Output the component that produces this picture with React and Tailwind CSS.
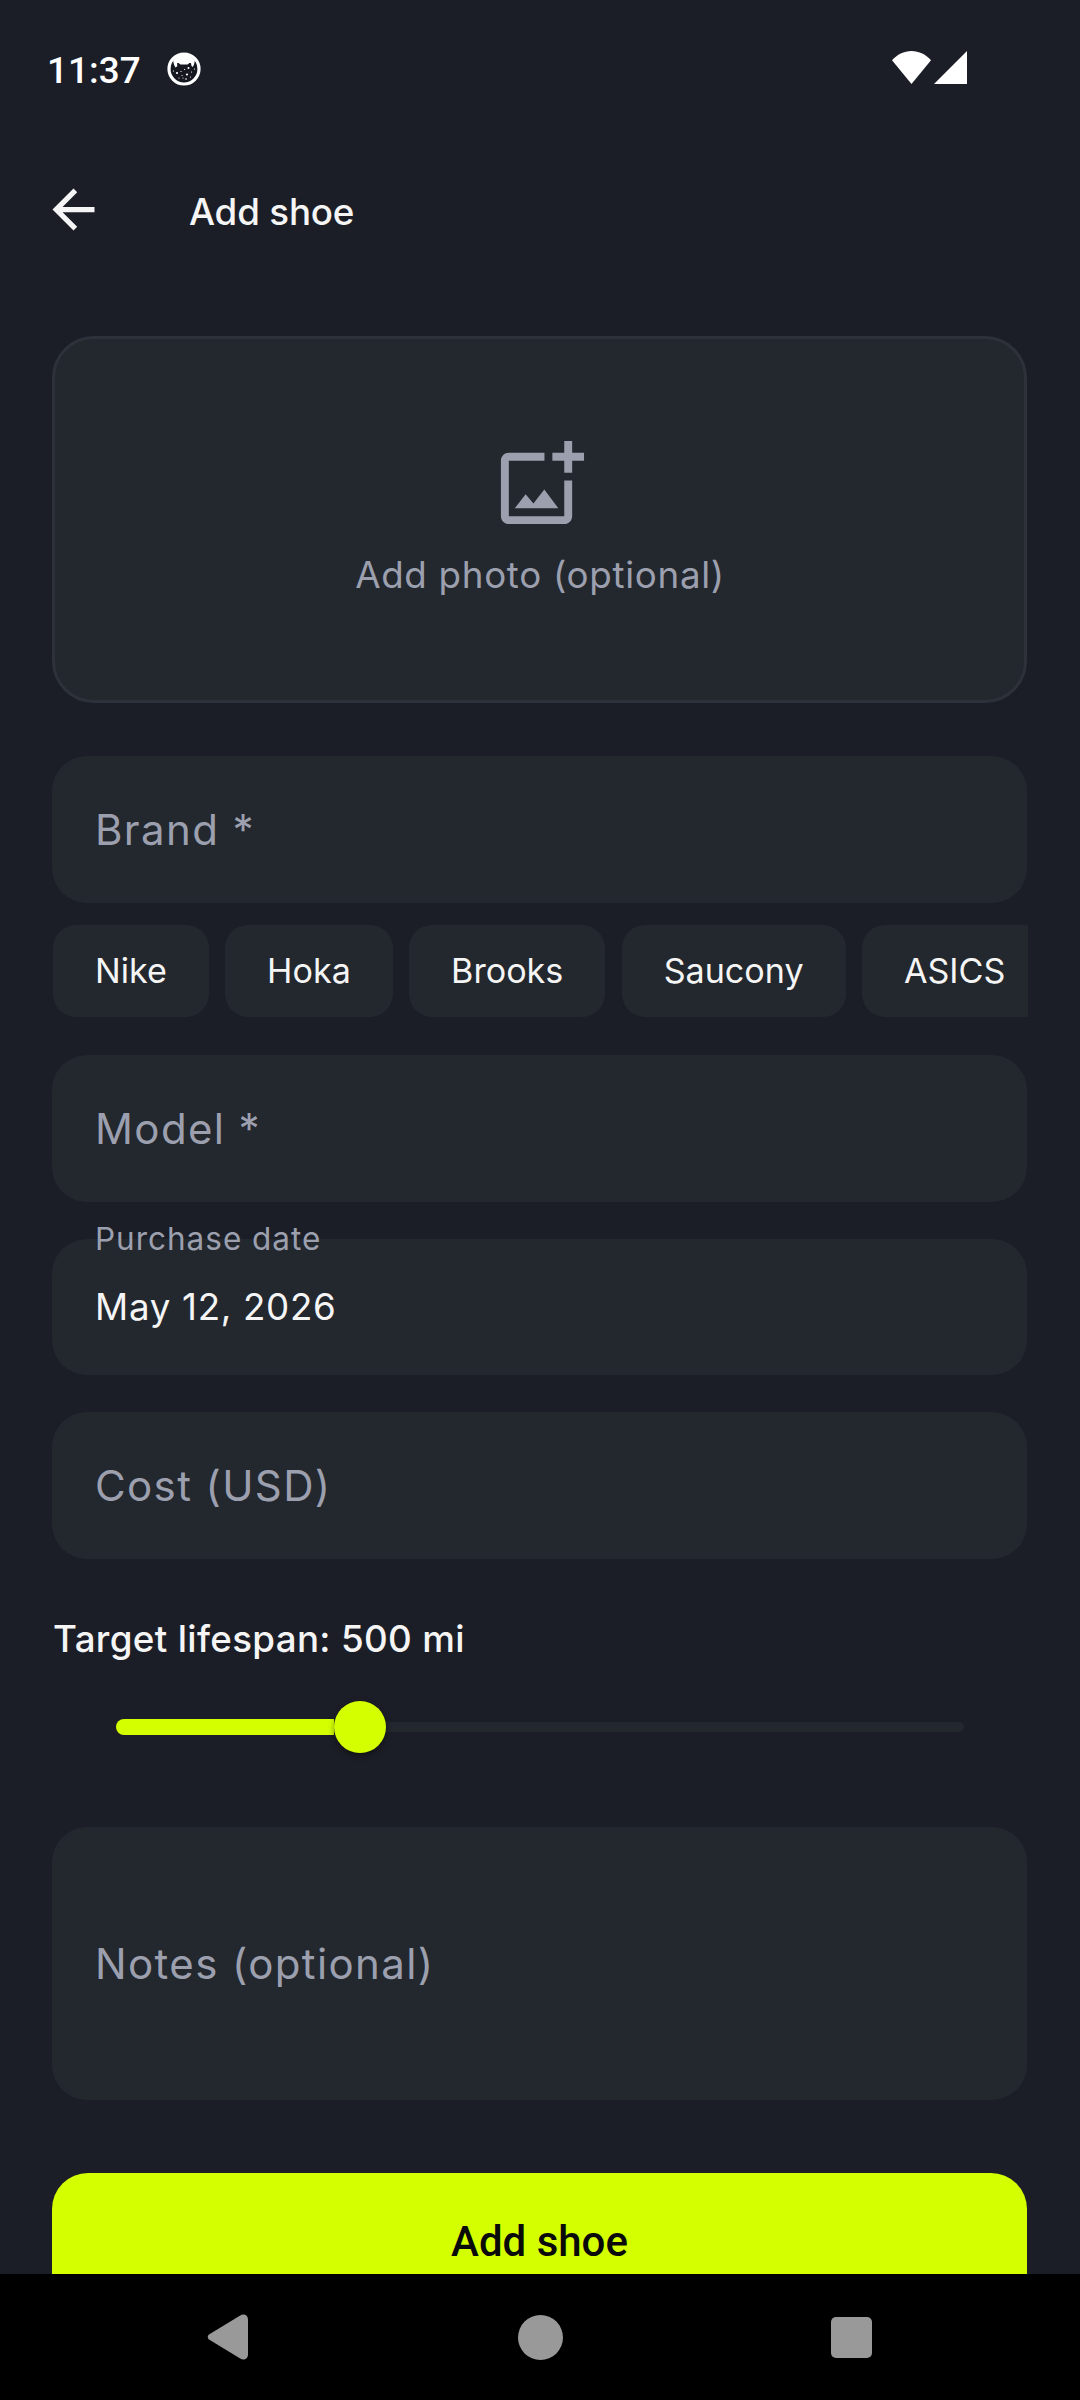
const BRANDS = ["Nike", "Hoka", "Brooks", "Saucony", "ASICS"];

function StatusBar() {
  return (
    <header className="flex h-[141px] shrink-0 items-start justify-between pl-[47px] pr-[113px]">
      <div className="flex items-center pt-[49px]">
        <span className="font-['Roboto',sans-serif] text-[36.75px] font-medium leading-[43px] tracking-[0.1px] text-white">
          11:37
        </span>
        <svg className="ml-[26px] -mt-[3px] size-[34px]" viewBox="0 0 34 34">
          <circle cx="17" cy="17" r="15" fill="#15181f" stroke="#fff" strokeWidth="3.2" />
          <path
            d="M6.2 8.6C9 4.6 13 2 17 2s8 2.6 10.8 6.6c-.2 2.6-.8 4.6-2 6.4l-1.3-.9-.6-3c-1.700-.2-2.400.6-3.300 1.400h-7.200c-.9-.8-1.600-1.600-3.300-1.400l.2 3.200-1.900 1.100C7.200 13.400 6.400 11.200 6.200 8.600z"
            fill="#fff"
          />
          <g fill="#fff">
            <circle cx="10" cy="21" r="1.1" />
            <circle cx="20" cy="22.5" r="1.1" />
            <circle cx="21.5" cy="16" r="1" />
            <circle cx="6.5" cy="19" r=".6" />
            <circle cx="14" cy="19.5" r=".6" />
            <circle cx="17.6" cy="17.5" r=".6" />
            <circle cx="24.5" cy="20" r=".6" />
            <circle cx="27.5" cy="17" r=".6" />
            <circle cx="15" cy="23.5" r=".6" />
            <circle cx="12" cy="26" r=".6" />
            <circle cx="19" cy="27" r=".8" />
            <circle cx="23.5" cy="25" r=".6" />
            <circle cx="16" cy="26" r=".5" />
          </g>
        </svg>
      </div>
      <div className="flex gap-[3px] pt-[51px]">
        <svg className="h-[33px] w-[39px]" viewBox="0 0 39 33" fill="#fff">
          <path d="M0 9.2C5 3.600 12 0 19.500 0S34 3.600 39 9.200L19.500 33z" />
        </svg>
        <svg className="h-[33px] w-[33px]" viewBox="0 0 33 33" fill="#fff">
          <path d="M33 0v33H0z" />
        </svg>
      </div>
    </header>
  );
}

function AppBar() {
  return (
    <div className="flex h-[140px] shrink-0 items-center pl-[42px]">
      <svg className="-mt-[3px] size-[63px]" viewBox="0 0 24 24" fill="#f5f5f5">
        <path d="M20 11H7.83l5.59-5.59L12 4l-8 8 8 8 1.41-1.41L7.83 13H20v-2z" />
      </svg>
      <h1 className="ml-[84px] pt-px text-[36.75px] font-medium leading-[44px] tracking-[-0.18px]">Add shoe</h1>
    </div>
  );
}

function PhotoPicker() {
  return (
    <div className="flex h-[367px] flex-col items-center rounded-[42px] border-[3px] border-[#2d3139] bg-[#23272e] pl-px pt-[98px] text-[#9ca0ae]">
      <svg className="size-[95px]" viewBox="0 0 24 24" fill="currentColor">
        <path d="M18 20H4V6h9V4H4c-1.1 0-2 .9-2 2v14c0 1.1.9 2 2 2h14c1.1 0 2-.9 2-2v-9h-2v9zm-7.79-3.17-1.96-2.36L5.5 18h11l-3.54-4.71zM20 4V1h-2v3h-3v2h3v3h2V6h3V4h-3z" />
      </svg>
      <span className="mt-[21px] text-[36.75px] leading-[44px] tracking-[0.68px]">Add photo (optional)</span>
    </div>
  );
}

function Field({ label, className }) {
  return (
    <div
      className={`flex items-center rounded-[35px] bg-[#23272e] pl-[43px] text-[42px] leading-[50px] tracking-[1.38px] text-[#9ca0ae] ${className}`}
    >
      {label}
    </div>
  );
}

function LifespanSlider() {
  return (
    <div className="mt-[40px] flex h-[52px] items-center pl-[64px] pr-[63px]">
      <div className="h-4 w-[218px] rounded-l-[8px] bg-[#d4ff00]" />
      <div className="z-10 size-[52px] shrink-0 rounded-full bg-[#d4ff00] shadow-[0_3px_6px_rgba(0,0,0,0.4)]" />
      <div className="h-[10px] flex-1 rounded-r-[5px] bg-[#23272e]" />
    </div>
  );
}

function NavBar() {
  return (
    <nav className="flex h-[126px] shrink-0 items-center bg-black pl-[207px] text-[#999999]">
      <svg className="h-[46px] w-[42px]" viewBox="0 0 42 46" fill="currentColor">
        <path d="M2.400 20.200 33.200 1.400C36.800-.6 41 1 41 5.800v34.400c0 4.800-4.200 6.400-7.800 4.400L2.400 25.800c-2.200-1.400-2.200-4.200 0-5.600z" />
      </svg>
      <div className="ml-[269px] size-[45px] rounded-full bg-current" />
      <div className="ml-[268px] size-[41px] rounded-[5px] bg-current" />
    </nav>
  );
}

export default function App() {
  return (
    <div className="flex h-[2400px] w-[1080px] flex-col overflow-hidden bg-[#1b1e26] font-['Inter',sans-serif] text-[#f5f5f5]">
      <StatusBar />
      <AppBar />
      <main className="min-h-0 flex-1 overflow-hidden pl-[52px] pr-[53px] pt-[55px]">
        <PhotoPicker />
        <Field label="Brand *" className="mt-[53px] h-[147px]" />
        <div className="-mr-px mt-[22px] flex gap-[16.3px] overflow-hidden pl-px">
          {BRANDS.map((brand) => (
            <button
              key={brand}
              className="h-[92px] shrink-0 rounded-[23px] bg-[#23272e] px-[42px] pb-[2px] text-[34.125px] leading-[41px]"
            >
              {brand}
            </button>
          ))}
        </div>
        <Field label="Model *" className="mt-[38px] h-[147px]" />
        <div className="relative mt-[37px] flex h-[136px] items-center rounded-[35px] bg-[#23272e] pl-[43px]">
          <span className="absolute -top-[19.5px] left-[43px] text-[31.5px] leading-[38px] tracking-[0.984px] text-[#9ca0ae]">
            Purchase date
          </span>
          <span className="text-[36.75px] leading-[44px] tracking-[0.68px]">May 12, 2026</span>
        </div>
        <Field label="Cost (USD)" className="mt-[37px] h-[147px]" />
        <h2 className="mt-[58px] pl-px text-[36.75px] font-medium leading-[44px] tracking-[0.34px]">
          Target lifespan: 500 mi
        </h2>
        <LifespanSlider />
        <Field label="Notes (optional)" className="mt-[74px] h-[273px]" />
        <button className="mt-[73px] block h-[137px] w-full rounded-[36px] bg-[#d4ff00] font-['Roboto',sans-serif] text-[42px] font-medium leading-[50px] text-[#0a0a0a]">
          Add shoe
        </button>
      </main>
      <NavBar />
    </div>
  );
}
